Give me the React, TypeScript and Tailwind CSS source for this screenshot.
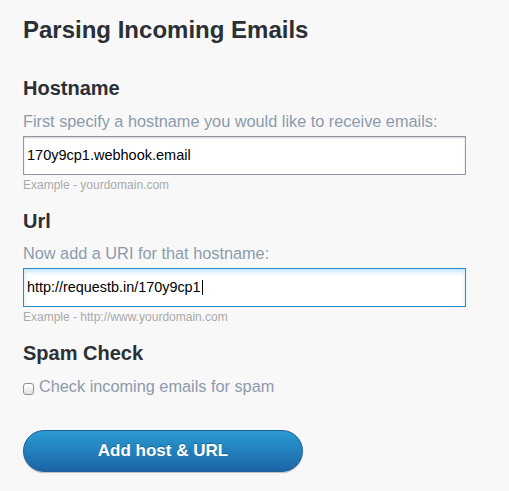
const font = { fontFamily: '"Liberation Sans", Arial, sans-serif' };

export default function App() {
	return (
		<div className="w-[509px] h-[491px] bg-[#f8f8f8] overflow-hidden" style={font}>
			<div className="pl-[23px] pt-[15px] w-[466px]">
				<h1 className="text-[24px] leading-[30px] font-bold text-[#2b3036]">Parsing Incoming Emails</h1>

				<h2 className="mt-[31px] text-[20px] leading-[24px] font-bold text-[#2b3036]">Hostname</h2>
				<p className="mt-[11px] text-[16.3px] leading-[20px] text-[#8b9bad]">First specify a hostname you would like to receive emails:</p>
				<div className="mt-[5px] flex items-center w-[443px] h-[39px] border border-[#8e98a3] bg-white px-[3px] text-[14.5px] text-black shadow-[inset_0_1px_2px_rgba(0,0,0,0.2)]">
					170y9cp1.webhook.email
				</div>
				<p className="mt-[3px] text-[12px] leading-[15px] text-[#aaaaaa]">Example - yourdomain.com</p>

				<h2 className="mt-[16px] text-[20px] leading-[24px] font-bold text-[#2b3036]">Url</h2>
				<p className="mt-[10px] text-[16.3px] leading-[20px] text-[#8b9bad]">Now add a URI for that hostname:</p>
				<div className="mt-[5px] flex items-center w-[443px] h-[39px] border border-[#2a8ac9] bg-white px-[3px] text-[14.4px] text-black shadow-[inset_0_3px_4px_rgba(120,200,240,0.45)]">
					http://requestb.in/170y9cp1
					<span className="ml-[1px] w-px h-[15px] bg-black" />
				</div>
				<p className="mt-[3px] text-[12px] leading-[15px] text-[#aaaaaa]">Example - http://www.yourdomain.com</p>

				<h2 className="mt-[16px] text-[20px] leading-[24px] font-bold text-[#2b3036]">Spam Check</h2>
				<label className="mt-[11px] flex items-center gap-[5px] text-[16.3px] leading-[20px] text-[#8b9bad]">
					<span className="mt-[5px] w-[11px] h-[12px] rounded-[3px] border border-[#8f8f8f] bg-gradient-to-b from-white to-[#e3e3e3]" />
					Check incoming emails for spam
				</label>

				<button
					className="mt-[34px] block w-[280px] h-[42px] rounded-full border border-[#1d5f99] bg-gradient-to-b from-[#2b9bd1] to-[#1d64a6] text-white text-[17px] font-bold shadow-[0_1px_1px_rgba(0,0,0,0.25)] [text-shadow:0_-1px_0_rgba(0,0,0,0.25)]"
					style={font}
				>
					Add host &amp; URL
				</button>
			</div>
		</div>
	);
}
